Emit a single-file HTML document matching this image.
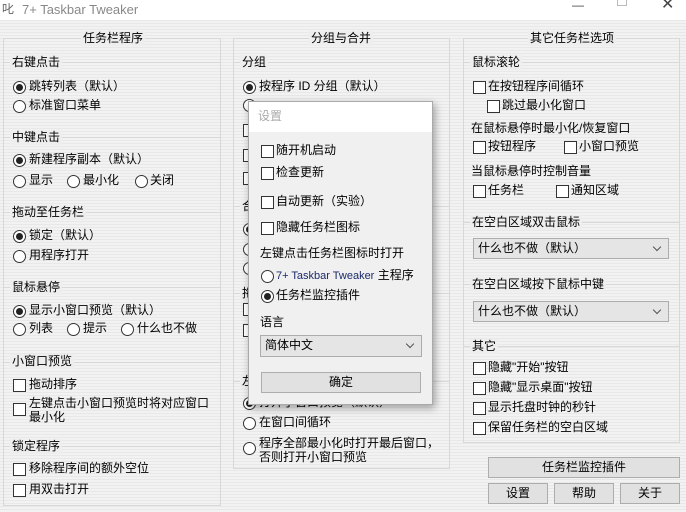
<!DOCTYPE html>
<html><head><meta charset="utf-8"><style>
*{margin:0;padding:0;box-sizing:border-box}
body{width:686px;height:512px;overflow:hidden;position:relative;font-family:"Liberation Sans","Noto Sans CJK SC",sans-serif;font-size:12px;color:#000;
background:repeating-linear-gradient(#f2f2f2 0 2px,#e8e8e8 2px 3px);}
.t{position:absolute;white-space:nowrap;line-height:15px}
.tb{position:absolute;left:0;top:0;width:686px;height:20px;background:#fff}
.box{position:absolute;border:1px solid #d8d8d8}
.hl{position:absolute;height:1px;background:#d8d8d8}
.lbl{position:absolute;white-space:nowrap;line-height:15px;padding:0 2px;background:#eeeeee}
.r{position:absolute;width:13px;height:13px;border:1px solid #333;border-radius:50%;background:#fff}
.r.c::after{content:"";position:absolute;left:2px;top:2px;width:7px;height:7px;border-radius:50%;background:#222}
.k{position:absolute;width:13px;height:13px;border:1px solid #333;background:#fff}
.btn{position:absolute;background:#e1e1e1;border:1px solid #adadad;text-align:center;line-height:18px}
.sel{position:absolute;background:#e5e5e5;border:1px solid #acacac;line-height:19px;padding-left:4px}
.sel::after{content:"";position:absolute;right:8px;top:5px;width:5px;height:5px;border-right:1px solid #555;border-bottom:1px solid #555;transform:rotate(45deg)}
</style></head><body>
<div class="tb"></div>
<div class="t" style="left:2px;top:2px;color:#666">叱</div>
<div class="t" style="left:22px;top:2px;color:#888;font-size:13px">7+ Taskbar Tweaker</div>
<div class="t" style="left:572px;top:-2px;color:#444">—</div>
<div style="position:absolute;left:617px;top:0px;width:10px;height:6px;border:1px solid #bbb;border-top:none"></div>
<div class="t" style="left:661px;top:-3px;color:#444;font-size:16px">✕</div>

<!-- left column -->
<div class="box" style="left:3px;top:38px;width:218px;height:468px"></div>
<div class="lbl" style="left:81px;top:31px">任务栏程序</div>
<div class="hl" style="left:4px;top:62px;width:216px"></div><div class="lbl" style="left:10px;top:55px">右键点击</div>
<div class="r c" style="left:13px;top:81px"></div><div class="t" style="left:29px;top:79px">跳转列表（默认）</div>
<div class="r" style="left:13px;top:100px"></div><div class="t" style="left:29px;top:98px">标准窗口菜单</div>
<div class="hl" style="left:4px;top:137px;width:216px"></div><div class="lbl" style="left:10px;top:130px">中键点击</div>
<div class="r c" style="left:13px;top:154px"></div><div class="t" style="left:29px;top:152px">新建程序副本（默认）</div>
<div class="r" style="left:13px;top:175px"></div><div class="t" style="left:29px;top:173px">显示</div>
<div class="r" style="left:67px;top:175px"></div><div class="t" style="left:83px;top:173px">最小化</div>
<div class="r" style="left:135px;top:175px"></div><div class="t" style="left:150px;top:173px">关闭</div>
<div class="hl" style="left:4px;top:212px;width:216px"></div><div class="lbl" style="left:10px;top:205px">拖动至任务栏</div>
<div class="r c" style="left:13px;top:230px"></div><div class="t" style="left:29px;top:228px">锁定（默认）</div>
<div class="r" style="left:13px;top:250px"></div><div class="t" style="left:29px;top:248px">用程序打开</div>
<div class="hl" style="left:4px;top:287px;width:216px"></div><div class="lbl" style="left:10px;top:280px">鼠标悬停</div>
<div class="r c" style="left:13px;top:305px"></div><div class="t" style="left:29px;top:303px">显示小窗口预览（默认）</div>
<div class="r" style="left:13px;top:323px"></div><div class="t" style="left:29px;top:321px">列表</div>
<div class="r" style="left:67px;top:323px"></div><div class="t" style="left:83px;top:321px">提示</div>
<div class="r" style="left:121px;top:323px"></div><div class="t" style="left:137px;top:321px">什么也不做</div>
<div class="hl" style="left:4px;top:362px;width:216px"></div><div class="lbl" style="left:10px;top:354px">小窗口预览</div>
<div class="k" style="left:13px;top:379px"></div><div class="t" style="left:29px;top:377px">拖动排序</div>
<div class="k" style="left:13px;top:403px"></div><div class="t" style="left:29px;top:396px;line-height:14px">左键点击小窗口预览时将对应窗口<br>最小化</div>
<div class="hl" style="left:4px;top:446px;width:216px"></div><div class="lbl" style="left:10px;top:439px">锁定程序</div>
<div class="k" style="left:13px;top:463px"></div><div class="t" style="left:29px;top:461px">移除程序间的额外空位</div>
<div class="k" style="left:13px;top:484px"></div><div class="t" style="left:29px;top:482px">用双击打开</div>

<!-- middle column -->
<div class="box" style="left:233px;top:38px;width:217px;height:431px"></div>
<div class="lbl" style="left:309px;top:31px">分组与合并</div>
<div class="hl" style="left:234px;top:62px;width:215px"></div><div class="lbl" style="left:240px;top:55px">分组</div>
<div class="r c" style="left:243px;top:81px"></div><div class="t" style="left:259px;top:79px">按程序 ID 分组（默认）</div>
<div class="r" style="left:243px;top:99px"></div>
<div class="k" style="left:243px;top:124px"></div>
<div class="k" style="left:243px;top:149px"></div>
<div class="k" style="left:243px;top:172px"></div>
<div class="hl" style="left:234px;top:206px;width:215px"></div><div class="lbl" style="left:240px;top:199px">合</div>
<div class="r c" style="left:243px;top:223px"></div>
<div class="r" style="left:243px;top:243px"></div>
<div class="r" style="left:243px;top:262px"></div>
<div class="hl" style="left:234px;top:293px;width:215px"></div><div class="lbl" style="left:240px;top:286px">拖</div>
<div class="k" style="left:243px;top:303px"></div>
<div class="k" style="left:243px;top:324px"></div>
<div class="hl" style="left:234px;top:381px;width:215px"></div><div class="lbl" style="left:240px;top:374px">左</div>
<div class="r c" style="left:243px;top:397px"></div><div class="t" style="left:259px;top:395px">打开小窗口预览（默认）</div>
<div class="r" style="left:243px;top:417px"></div><div class="t" style="left:259px;top:415px">在窗口间循环</div>
<div class="r" style="left:243px;top:442px"></div><div class="t" style="left:259px;top:436px;line-height:14px">程序全部最小化时打开最后窗口，<br>否则打开小窗口预览</div>

<!-- right column -->
<div class="box" style="left:463px;top:38px;width:217px;height:405px"></div>
<div class="lbl" style="left:528px;top:31px">其它任务栏选项</div>
<div class="hl" style="left:464px;top:62px;width:215px"></div><div class="lbl" style="left:470px;top:55px">鼠标滚轮</div>
<div class="k" style="left:473px;top:81px"></div><div class="t" style="left:488px;top:79px">在按钮程序间循环</div>
<div class="k" style="left:487px;top:100px"></div><div class="t" style="left:502px;top:98px">跳过最小化窗口</div>
<div class="t" style="left:471px;top:121px">在鼠标悬停时最小化/恢复窗口</div>
<div class="k" style="left:473px;top:141px"></div><div class="t" style="left:488px;top:139px">按钮程序</div>
<div class="k" style="left:564px;top:141px"></div><div class="t" style="left:579px;top:139px">小窗口预览</div>
<div class="t" style="left:471px;top:164px">当鼠标悬停时控制音量</div>
<div class="k" style="left:473px;top:185px"></div><div class="t" style="left:488px;top:183px">任务栏</div>
<div class="k" style="left:556px;top:185px"></div><div class="t" style="left:571px;top:183px">通知区域</div>
<div class="hl" style="left:464px;top:222px;width:215px"></div><div class="lbl" style="left:470px;top:215px">在空白区域双击鼠标</div>
<div class="sel" style="left:473px;top:238px;width:196px;height:21px">什么也不做（默认）</div>
<div class="hl" style="left:464px;top:284px;width:215px"></div><div class="lbl" style="left:470px;top:277px">在空白区域按下鼠标中键</div>
<div class="sel" style="left:473px;top:301px;width:196px;height:21px">什么也不做（默认）</div>
<div class="hl" style="left:464px;top:346px;width:215px"></div><div class="lbl" style="left:470px;top:339px">其它</div>
<div class="k" style="left:473px;top:362px"></div><div class="t" style="left:488px;top:360px">隐藏"开始"按钮</div>
<div class="k" style="left:473px;top:382px"></div><div class="t" style="left:488px;top:380px">隐藏"显示桌面"按钮</div>
<div class="k" style="left:473px;top:402px"></div><div class="t" style="left:488px;top:400px">显示托盘时钟的秒针</div>
<div class="k" style="left:473px;top:422px"></div><div class="t" style="left:488px;top:420px">保留任务栏的空白区域</div>
<div class="btn" style="left:488px;top:457px;width:192px;height:21px">任务栏监控插件</div>
<div class="btn" style="left:488px;top:483px;width:60px;height:21px">设置</div>
<div class="btn" style="left:554px;top:483px;width:60px;height:21px">帮助</div>
<div class="btn" style="left:620px;top:483px;width:60px;height:21px">关于</div>

<!-- popup -->
<div style="position:absolute;left:248px;top:101px;width:185px;height:304px;background:#f0f0f0;border:1px solid #aaa;box-shadow:2px 3px 8px rgba(0,0,0,.35)">
<div style="height:30px;background:#fff"></div></div>
<div class="t" style="left:258px;top:109px;color:#aaa">设置</div>
<div class="k" style="left:261px;top:145px"></div><div class="t" style="left:276px;top:143px">随开机启动</div>
<div class="k" style="left:261px;top:167px"></div><div class="t" style="left:276px;top:165px">检查更新</div>
<div class="k" style="left:261px;top:196px"></div><div class="t" style="left:276px;top:194px">自动更新（实验）</div>
<div class="k" style="left:261px;top:222px"></div><div class="t" style="left:276px;top:220px">隐藏任务栏图标</div>
<div class="t" style="left:260px;top:246px">左键点击任务栏图标时打开</div>
<div class="r" style="left:261px;top:270px"></div><div class="t" style="left:276px;top:268px"><span style="color:#1a2a6a;font-size:11px">7+ Taskbar Tweaker</span> 主程序</div>
<div class="r c" style="left:261px;top:290px"></div><div class="t" style="left:276px;top:288px">任务栏监控插件</div>
<div class="t" style="left:260px;top:315px">语言</div>
<div class="sel" style="left:260px;top:335px;width:162px;height:22px">简体中文</div>
<div class="btn" style="left:261px;top:372px;width:160px;height:21px">确定</div>
</body></html>
